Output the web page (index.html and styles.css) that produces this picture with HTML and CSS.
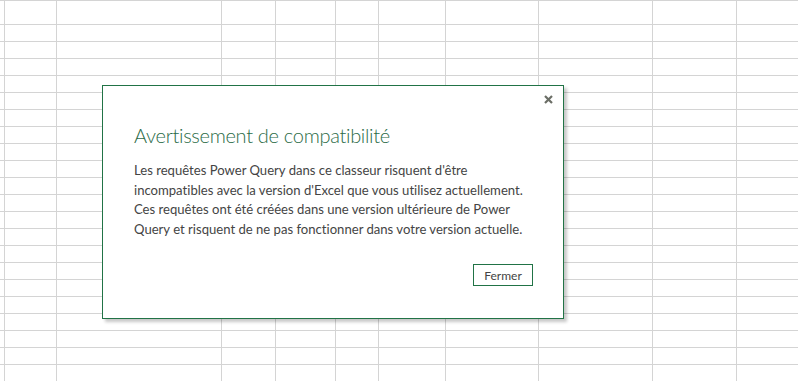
FILE: index.html
```html
<!DOCTYPE html>
<html lang="fr">
<head>
<meta charset="utf-8">
<title>Avertissement de compatibilité</title>
<link rel="stylesheet" href="styles.css">
</head>
<body>
<div class="sheet">
  <div class="col" style="width:5px"></div>
  <div class="col" style="width:52px"></div>
  <div class="col" style="width:165px"></div>
  <div class="col" style="width:54px"></div>
  <div class="col" style="width:60px"></div>
  <div class="col" style="width:43px"></div>
  <div class="col" style="width:67px"></div>
  <div class="col" style="width:93px"></div>
  <div class="col" style="width:114px"></div>
  <div class="col" style="width:84px"></div>
  <div class="col last"></div>
</div>
<div class="dialog" role="dialog">
  <button class="close" aria-label="Fermer">
    <svg width="9" height="9" viewBox="0 0 9 9"><path d="M1 1 L8 8 M8 1 L1 8" stroke="#6b6e66" stroke-width="2.2" stroke-linecap="butt"/></svg>
  </button>
  <h1 class="title">Avertissement de compatibilité</h1>
  <p class="message">Les requêtes Power Query dans ce classeur risquent d'être<br>incompatibles avec la version d'Excel que vous utilisez actuellement.<br>Ces requêtes ont été créées dans une version ultérieure de Power<br>Query et risquent de ne pas fonctionner dans votre version actuelle.</p>
  <div class="actions">
    <button class="btn">Fermer</button>
  </div>
</div>
</body>
</html>
```

FILE: styles.css
```css
html, body {
  margin: 0;
  padding: 0;
  width: 798px;
  height: 381px;
  overflow: hidden;
  background: #fff;
  font-family: "Lato", "Open Sans", sans-serif;
  font-variant-ligatures: none;
}
.sheet {
  display: flex;
  height: 381px;
  background: repeating-linear-gradient(to bottom, transparent 0 16px, #d4d4d4 16px 17px);
  background-position: 0 8px;
}
.col {
  flex: none;
  box-sizing: border-box;
  border-right: 1px solid #d4d4d4;
  height: 100%;
}
.col.last {
  flex: 1;
  border-right: none;
}
.dialog {
  position: absolute;
  left: 102px;
  top: 85px;
  width: 462px;
  height: 234px;
  box-sizing: border-box;
  background: #fff;
  border: 1px solid #217346;
  box-shadow: 3px 3px 3px rgba(0,0,0,0.22);
  padding: 36px 31px 0 31px;
}
.close {
  position: absolute;
  top: 6px;
  right: 7px;
  width: 15px;
  height: 15px;
  padding: 0;
  border: none;
  background: transparent;
  display: flex;
  align-items: center;
  justify-content: center;
}
.title {
  margin: 0;
  font-weight: 300;
  font-size: 20px;
  letter-spacing: -0.3px;
  line-height: 26px;
  color: #2b6b47;
  font-variant-ligatures: none;
}
.message {
  margin: 13px 0 0 0;
  font-size: 13.1px;
  line-height: 19.5px;
  color: #444;
  white-space: nowrap;
}
.actions {
  display: flex;
  justify-content: flex-end;
  margin-top: 25px;
}
.btn {
  width: 60px;
  height: 22px;
  box-sizing: border-box;
  margin-right: -1px;
  border: 1px solid #217346;
  background: #fff;
  font-family: "Lato", "Open Sans", sans-serif;
  font-size: 12px;
  color: #444;
  padding: 0;
}
```
